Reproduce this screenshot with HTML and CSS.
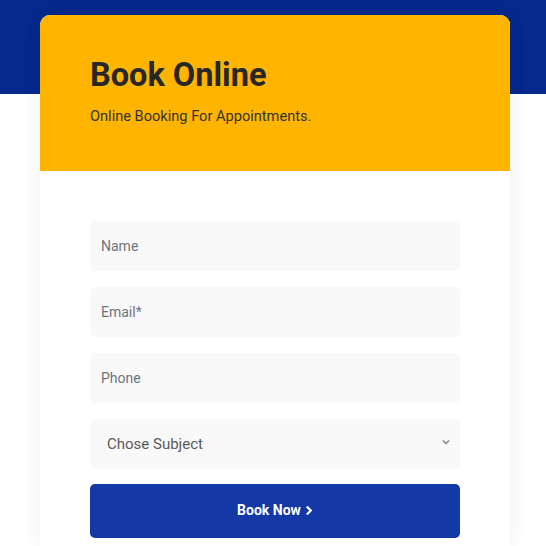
FILE: index.html
```html
<!DOCTYPE html>
<html lang="en">
<head>
    <meta charset="UTF-8">
    <meta name="viewport" content="width=device-width, initial-scale=1.0">
    <title>Book Online</title>
    <link rel="stylesheet" href="styles.css">
</head>
<body>

    <div class="booking">
        <div class="booking-head">
            <h2>Book Online</h2>
            <p>Online Booking For Appointments.</p>
        </div>

        <form class="booking-form">
            <input type="text" placeholder="Name">
            <input type="email" placeholder="Email*">
            <input type="text" placeholder="Phone">
            <div class="select-wrap">
                <select>
                    <option>Chose Subject</option>
                    <option>Consultation</option>
                    <option>Check Up</option>
                </select>
                <svg class="select-arrow" width="8" height="6" viewBox="0 0 8 6">
                    <path d="M1 1.5 L4 4.5 L7 1.5" fill="none" stroke="#8a8a8a" stroke-width="1.6"/>
                </svg>
            </div>
            <button type="submit">Book Now
                <svg width="8" height="11" viewBox="0 0 8 11">
                    <path d="M1.8 1.5 L5.8 5.5 L1.8 9.5" fill="none" stroke="#fff" stroke-width="2.2"/>
                </svg>
            </button>
        </form>
    </div>

</body>
</html>
```

FILE: styles.css
```css
body {
    margin: 0;
    font-family: Roboto, "Liberation Sans", sans-serif;
    background: linear-gradient(#05298c 0, #05298c 94px, #fff 94px);
    color: #2b2b2b;
}

.booking {
    width: 470px;
    margin: 15px 0 0 40px;
    background: #fff;
    border-radius: 10px 10px 0 0;
    box-shadow: 0 0 20px rgba(0, 0, 0, 0.07);
}

.booking-head {
    background: #ffb400;
    border-radius: 10px 10px 0 0;
    padding: 40px 50px 0;
    height: 116px;
}

.booking-head h2 {
    margin: 0;
    font-size: 32.5px;
    line-height: 40px;
    font-weight: 700;
    color: #272727;
}

.booking-head p {
    margin: 11px 0 0;
    font-size: 14.6px;
    line-height: 20px;
    color: #333;
}

.booking-form {
    padding: 50px 50px 8px;
    display: flex;
    flex-direction: column;
    gap: 16px;
}

.booking-form input,
.booking-form select {
    box-sizing: border-box;
    width: 100%;
    height: 50px;
    border: none;
    border-radius: 5px;
    background: #f9f9f9;
    padding: 0 11px;
    font-family: inherit;
    font-size: 14px;
    color: #555;
    outline: none;
}

.booking-form input::placeholder {
    color: #6c757d;
}

.select-wrap {
    position: relative;
}

.booking-form select {
    appearance: none;
    padding: 0 17px;
    font-size: 15px;
    color: #5a5a5a;
}

.select-arrow {
    position: absolute;
    right: 10px;
    top: 20px;
}

.booking-form button {
    height: 54px;
    margin-top: -1px;
    border: none;
    border-radius: 5px;
    background: #1438a6;
    color: #fff;
    font-family: inherit;
    font-size: 14px;
    font-weight: 700;
    cursor: pointer;
    display: flex;
    align-items: center;
    justify-content: center;
    gap: 4px;
    padding-top: 0;
    padding-bottom: 2px;
}
```
